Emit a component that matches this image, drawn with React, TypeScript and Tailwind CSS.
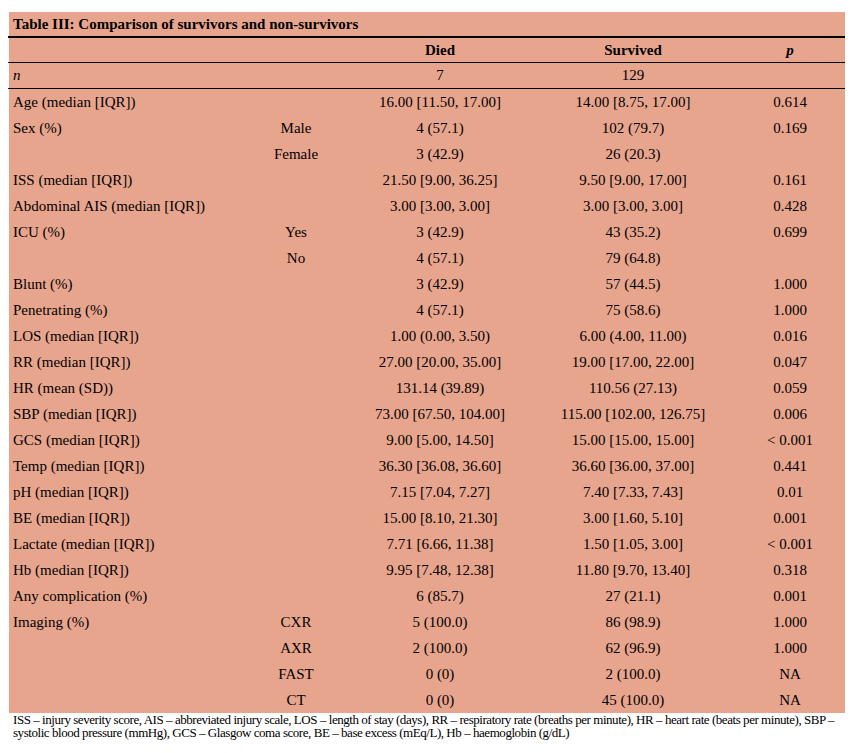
import React from 'react';

interface Row {
  label: string;
  sub?: string;
  died: string;
  survived: string;
  p?: string;
}

const rows: Row[] = [
  { label: 'Age (median [IQR])', died: '16.00 [11.50, 17.00]', survived: '14.00 [8.75, 17.00]', p: '0.614' },
  { label: 'Sex (%)', sub: 'Male', died: '4 (57.1)', survived: '102 (79.7)', p: '0.169' },
  { label: '', sub: 'Female', died: '3 (42.9)', survived: '26 (20.3)' },
  { label: 'ISS (median [IQR])', died: '21.50 [9.00, 36.25]', survived: '9.50 [9.00, 17.00]', p: '0.161' },
  { label: 'Abdominal AIS (median [IQR])', died: '3.00 [3.00, 3.00]', survived: '3.00 [3.00, 3.00]', p: '0.428' },
  { label: 'ICU (%)', sub: 'Yes', died: '3 (42.9)', survived: '43 (35.2)', p: '0.699' },
  { label: '', sub: 'No', died: '4 (57.1)', survived: '79 (64.8)' },
  { label: 'Blunt (%)', died: '3 (42.9)', survived: '57 (44.5)', p: '1.000' },
  { label: 'Penetrating (%)', died: '4 (57.1)', survived: '75 (58.6)', p: '1.000' },
  { label: 'LOS (median [IQR])', died: '1.00 (0.00, 3.50)', survived: '6.00 (4.00, 11.00)', p: '0.016' },
  { label: 'RR (median [IQR])', died: '27.00 [20.00, 35.00]', survived: '19.00 [17.00, 22.00]', p: '0.047' },
  { label: 'HR (mean (SD))', died: '131.14 (39.89)', survived: '110.56 (27.13)', p: '0.059' },
  { label: 'SBP (median [IQR])', died: '73.00 [67.50, 104.00]', survived: '115.00 [102.00, 126.75]', p: '0.006' },
  { label: 'GCS (median [IQR])', died: '9.00 [5.00, 14.50]', survived: '15.00 [15.00, 15.00]', p: '< 0.001' },
  { label: 'Temp (median [IQR])', died: '36.30 [36.08, 36.60]', survived: '36.60 [36.00, 37.00]', p: '0.441' },
  { label: 'pH (median [IQR])', died: '7.15 [7.04, 7.27]', survived: '7.40 [7.33, 7.43]', p: '0.01' },
  { label: 'BE (median [IQR])', died: '15.00 [8.10, 21.30]', survived: '3.00 [1.60, 5.10]', p: '0.001' },
  { label: 'Lactate (median [IQR])', died: '7.71 [6.66, 11.38]', survived: '1.50 [1.05, 3.00]', p: '< 0.001' },
  { label: 'Hb (median [IQR])', died: '9.95 [7.48, 12.38]', survived: '11.80 [9.70, 13.40]', p: '0.318' },
  { label: 'Any complication (%)', died: '6 (85.7)', survived: '27 (21.1)', p: '0.001' },
  { label: 'Imaging (%)', sub: 'CXR', died: '5 (100.0)', survived: '86 (98.9)', p: '1.000' },
  { label: '', sub: 'AXR', died: '2 (100.0)', survived: '62 (96.9)', p: '1.000' },
  { label: '', sub: 'FAST', died: '0 (0)', survived: '2 (100.0)', p: 'NA' },
  { label: '', sub: 'CT', died: '0 (0)', survived: '45 (100.0)', p: 'NA' },
];

const cols = 'grid grid-cols-[234px_106px_182px_204px_110px]';

const App: React.FC = () => {
  return (
    <div className="bg-white min-h-[753px] w-[859px] pt-[12px] text-black font-['Liberation_Serif','Times_New_Roman',serif]">
      <div className="ml-[9px] w-[836px] bg-[#e8a58e] text-[15px]">
        <div className="h-[24px] flex items-center pl-[4px] font-bold">
          Table III: Comparison of survivors and non-survivors
        </div>
        <div className="h-[2px] bg-black -ml-[1px]" />

        {/* column headings */}
        <div className={`${cols} h-[24px] items-center font-bold`}>
          <div />
          <div />
          <div className="text-center">Died</div>
          <div className="text-center">Survived</div>
          <div className="text-center italic">p</div>
        </div>
        <div className="h-[1px] bg-black -ml-[1px]" />

        <div className={`${cols} h-[25px] items-center`}>
          <div className="pl-[4px] italic">n</div>
          <div />
          <div className="text-center">7</div>
          <div className="text-center">129</div>
          <div />
        </div>
        <div className="h-[1px] bg-black -ml-[1px]" />

        {rows.map((r, i) => (
          <div key={i} className={`${cols} h-[26px] items-center`}>
            <div className="pl-[4px] whitespace-nowrap">{r.label}</div>
            <div className="text-center">{r.sub}</div>
            <div className="text-center whitespace-nowrap">{r.died}</div>
            <div className="text-center whitespace-nowrap">{r.survived}</div>
            <div className="text-center">{r.p}</div>
          </div>
        ))}
      </div>
      <div className="ml-[13px] text-[13px] leading-[13px] tracking-[-0.45px] whitespace-nowrap">
        <div>
          ISS – injury severity score, AIS – abbreviated injury scale, LOS – length of stay (days), RR – respiratory rate (breaths per minute), HR – heart rate (beats per minute), SBP –
        </div>
        <div>
          systolic blood pressure (mmHg), GCS – Glasgow coma score, BE – base excess (mEq/L), Hb – haemoglobin (g/dL)
        </div>
      </div>
    </div>
  );
};

export default App;
